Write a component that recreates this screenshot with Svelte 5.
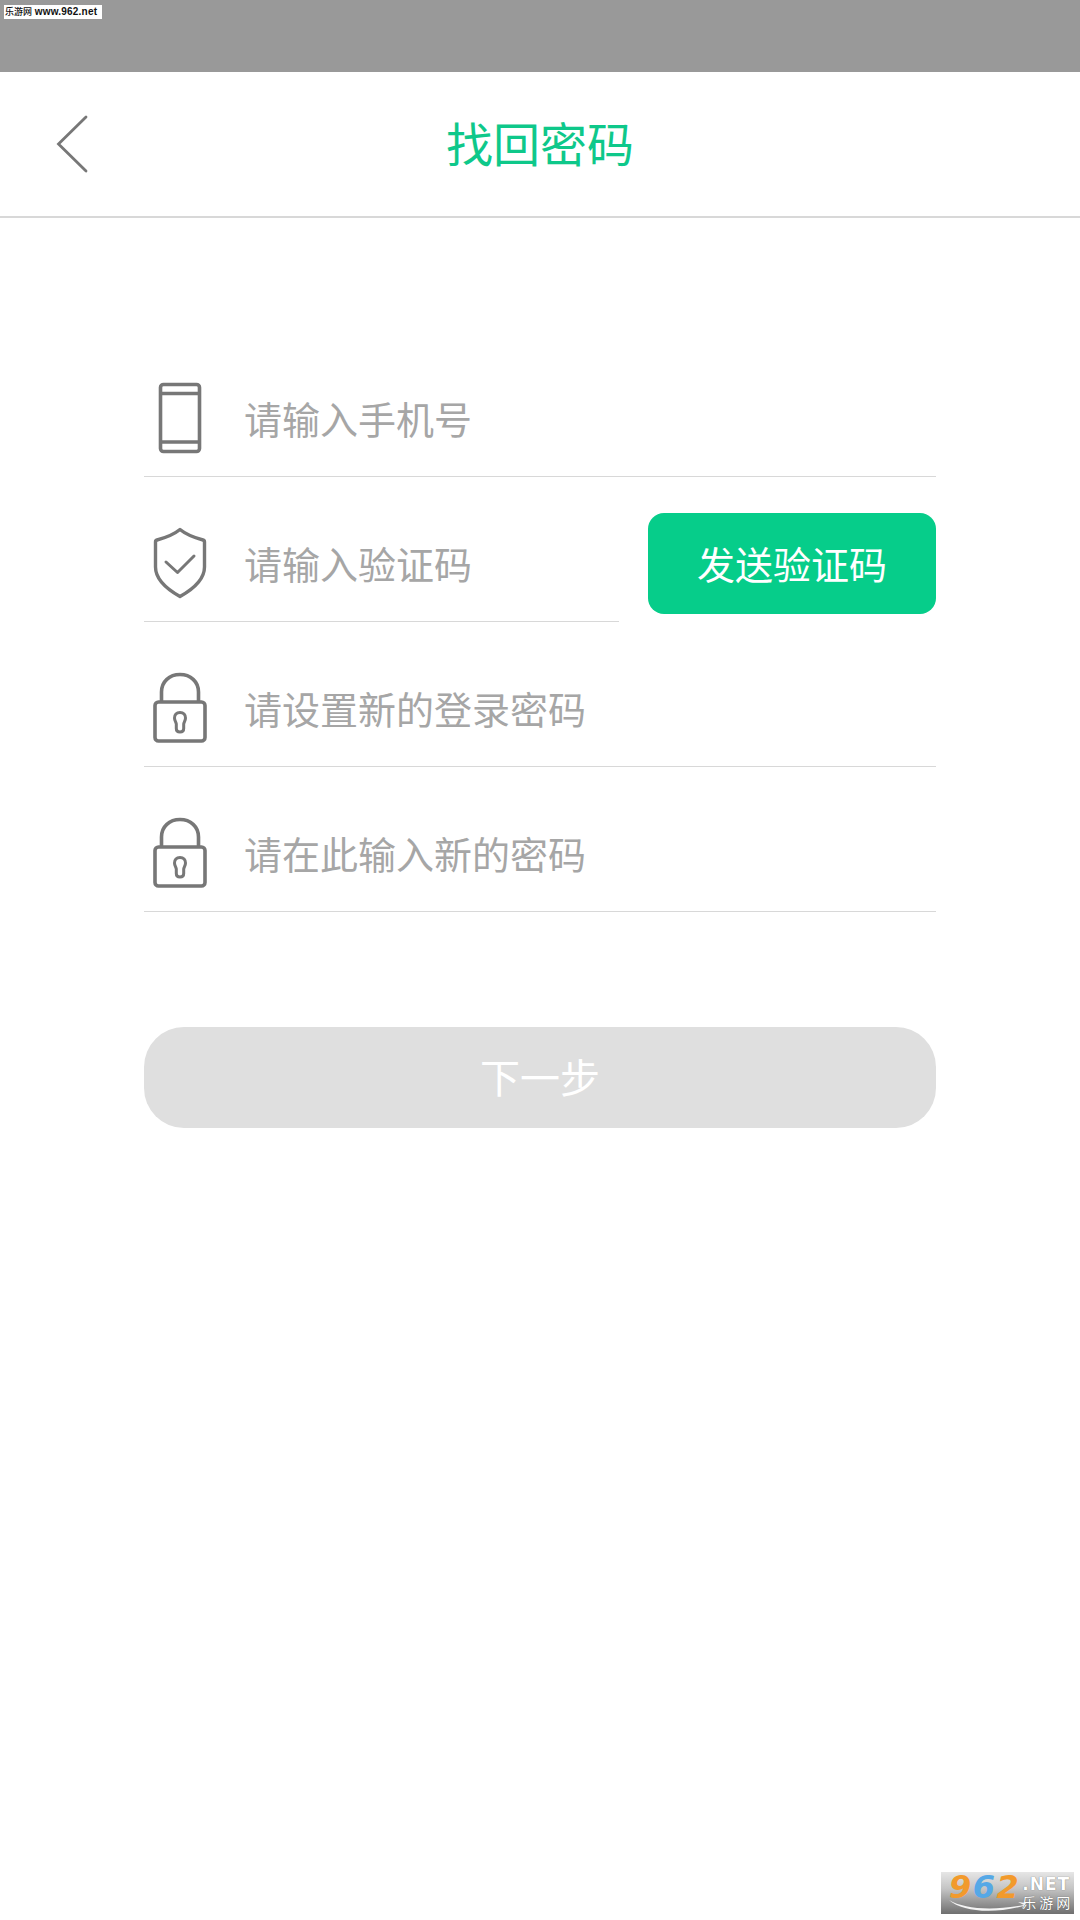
<div class="page">
  <div class="status">
    <div class="mark"><span class="mark-cn">乐游网</span> <span class="mark-en">www.962.net</span></div>
  </div>

  <header class="head">
    <svg class="back" width="34" height="60" viewBox="0 0 34 60" fill="none" aria-hidden="true">
      <path d="M31 3 L3.5 30 L31 57" stroke="#777" stroke-width="2.8" stroke-linecap="round" stroke-linejoin="miter"/>
    </svg>
    <h1 class="title">找回密码</h1>
  </header>

  <main class="form">
    <div class="row">
      <div class="field">
        <div class="ico">
          <svg width="46" height="72" viewBox="0 0 46 72" fill="none" stroke="#777" stroke-width="3.6" aria-hidden="true">
            <rect x="3.5" y="2.5" width="39" height="67" rx="3"/>
            <path d="M4 11.5H42M4 60H42"/>
          </svg>
        </div>
        <span class="ph">请输入手机号</span>
      </div>
    </div>

    <div class="row two">
      <div class="field">
        <div class="ico">
          <svg width="54" height="72" viewBox="0 0 54 72" fill="none" stroke="#777" stroke-linejoin="round" stroke-linecap="round" aria-hidden="true">
            <path stroke-width="3.4" d="M27 2.5 C32.5 7 39 10 50 13 C51.1 13.3 51.5 14 51.5 15 V40 C51.5 50 44 60 27 69.5 C10 60 2.5 50 2.5 40 V15 C2.5 14 2.9 13.3 4 13 C15 10 21.5 7 27 2.5 Z"/>
            <path stroke-width="3" d="M13 35 L24.5 45.5 L41 29"/>
          </svg>
        </div>
        <span class="ph">请输入验证码</span>
      </div>
      <button class="send" type="button">发送验证码</button>
    </div>

    {#each ['请设置新的登录密码', '请在此输入新的密码'] as text}
      <div class="row">
        <div class="field">
          <div class="ico">
            <svg width="54" height="72" viewBox="0 0 54 72" fill="none" stroke="#777" stroke-width="3.6" aria-hidden="true">
              <path d="M8.5 30 V20 C8.5 9.5 16.5 2.5 27 2.5 C37.5 2.5 45.5 9.5 45.5 20 V30"/>
              <rect x="2" y="30" width="50" height="39" rx="3.5"/>
              <path stroke-width="3" d="M27 40.5 C30.6 40.5 32.5 43 32.5 46 C32.5 48.5 31 50 30.7 52 V56.5 C30.7 58.6 29.2 60 27 60 C24.8 60 23.3 58.6 23.3 56.5 V52 C23 50 21.5 48.5 21.5 46 C21.5 43 23.4 40.5 27 40.5 Z"/>
            </svg>
          </div>
          <span class="ph">{text}</span>
        </div>
      </div>
    {/each}

    <button class="next" type="button">下一步</button>
  </main>

  <div class="logo">
    <svg class="swoosh" width="78" height="14" viewBox="0 0 78 14" aria-hidden="true">
      <path d="M1 1 C16 10 44 12 76 6 L70 3 L78 4 L74 10 L75 7 C46 15 14 13 1 1 Z" fill="#f4f4f4"/>
    </svg>
    <div class="logo-num"><span class="o">9</span><span class="b">6</span><span class="o">2</span></div>
    <div class="logo-side">
      <span class="logo-net">.NET</span>
      <span class="logo-cn">乐游网</span>
    </div>
  </div>
</div>

<style>
  :global(body) {
    margin: 0;
    background: #fff;
  }
  .page {
    position: relative;
    width: 1080px;
    height: 1920px;
    overflow: hidden;
    background: #fff;
    font-family: "Noto Sans CJK SC", "Noto Sans", sans-serif;
  }
  .status {
    position: relative;
    height: 72px;
    background: #999;
  }
  .mark {
    position: absolute;
    left: 4px;
    top: 5px;
    width: 98px;
    height: 14px;
    background: #fff;
    color: #111;
    line-height: 14px;
    white-space: nowrap;
    overflow: hidden;
    font-family: "Liberation Sans", "Noto Sans CJK SC", sans-serif;
    font-size: 10px;
  }
  .mark-cn { font-size: 9px; font-weight: 500; margin-left: 1px; }
  .mark-en { font-weight: 700; letter-spacing: 0.2px; }
  .head {
    position: relative;
    height: 144px;
    border-bottom: 2px solid #d8d8d8;
    display: flex;
    align-items: center;
    justify-content: center;
  }
  .back {
    position: absolute;
    left: 55px;
    top: 42px;
  }
  .title {
    margin: 0;
    font-size: 47px;
    font-weight: 400;
    color: #0ec88a;
    line-height: 144px;
    position: relative;
    top: -2px;
  }
  .form {
    padding: 114px 144px 0;
    display: flex;
    flex-direction: column;
  }
  .row {
    height: 145px;
    display: flex;
    align-items: flex-end;
    gap: 29px;
  }
  .field {
    flex: 1;
    height: 145px;
    box-sizing: border-box;
    border-bottom: 1px solid #d8d8d8;
    padding-bottom: 22px;
    display: flex;
    align-items: flex-end;
    gap: 28px;
  }
  .ico {
    width: 72px;
    height: 72px;
    display: flex;
    align-items: center;
    justify-content: center;
    flex: none;
  }
  .ph {
    font-size: 38px;
    line-height: 72px;
    color: #a6a6a6;
    white-space: nowrap;
  }
  .send {
    flex: none;
    width: 288px;
    height: 101px;
    margin-bottom: 8px;
    border: 0;
    border-radius: 16px;
    background: #06cd8a;
    color: #fff;
    font: inherit;
    font-size: 38px;
    line-height: 99px;
    padding: 0 0 2px;
  }
  .next {
    margin-top: 115px;
    width: 792px;
    height: 101px;
    border: 0;
    border-radius: 40px;
    background: #dfdfdf;
    color: #fff;
    font: inherit;
    font-size: 40px;
    line-height: 99px;
    padding: 0 0 2px;
  }
  .logo {
    position: absolute;
    left: 941px;
    top: 1872px;
    width: 133px;
    height: 42px;
    background: linear-gradient(#e6e6e6 0%, #c4c4c4 40%, #6f6f6f 100%);
    display: flex;
    gap: 2px;
    padding: 2px 0 0 8px;
    box-sizing: border-box;
  }
  .swoosh {
    position: absolute;
    left: 7px;
    top: 27px;
  }
  .logo-num {
    font-family: "DejaVu Sans", sans-serif;
    font-weight: 700;
    font-style: italic;
    font-size: 32px;
    line-height: 26px;
    height: 26px;
    letter-spacing: 1.5px;
  }
  .o { color: #f29a2c; }
  .b { color: #55a8e6; }
  .logo-side {
    display: flex;
    flex-direction: column;
    color: #fff;
    white-space: nowrap;
  }
  .logo-net {
    font-family: "DejaVu Sans", sans-serif;
    font-weight: 700;
    font-size: 17px;
    line-height: 20px;
    letter-spacing: 1px;
    text-shadow: 0 0 1px #555;
  }
  .logo-cn {
    font-size: 14px;
    line-height: 17px;
    letter-spacing: 3px;
    text-shadow: 0 0 1px #444;
  }
</style>
